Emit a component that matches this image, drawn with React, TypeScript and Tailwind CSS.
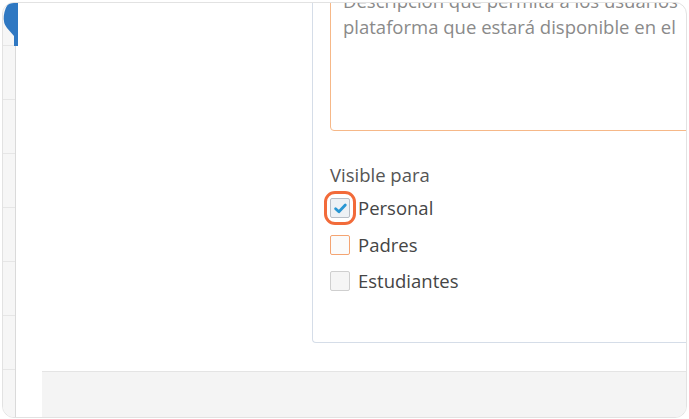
import React from "react";

const font = { fontFamily: '"Open Sans", "Noto Sans", sans-serif' };

function Box({ kind }: { kind: "checked" | "orange" | "plain" }) {
  if (kind === "checked") {
    return (
      <span className="relative flex h-[20px] w-[20px] shrink-0 items-center justify-center">
        <span className="absolute -left-[6px] -top-[7px] h-[34px] w-[32px] rounded-[11px] border-[3px] border-[#f26b3a]" />
        <span className="flex h-[20px] w-[20px] items-center justify-center rounded-[2px] border border-[#b7bec7] bg-[#edf1f5]">
          <svg width="15" height="15" viewBox="0 0 15 15">
            <path d="M2.6 7.8 L5.9 10.8 L12.3 4" fill="none" stroke="#2896d3" strokeWidth="2.8" strokeLinecap="round" strokeLinejoin="round" />
          </svg>
        </span>
      </span>
    );
  }
  if (kind === "orange") {
    return <span className="h-[20px] w-[20px] shrink-0 rounded-[2px] border border-[#f4a472] bg-[#fbfbfb]" />;
  }
  return <span className="h-[20px] w-[20px] shrink-0 rounded-[2px] border border-[#cfcfcf] bg-[#f5f5f5]" />;
}

function Row({ kind, label }: { kind: "checked" | "orange" | "plain"; label: string }) {
  return (
    <div className="flex h-[36.5px] items-center gap-[8px]">
      <Box kind={kind} />
      <span className="text-[18.5px] leading-[24px] text-[#454545]">{label}</span>
    </div>
  );
}

export default function App() {
  return (
    <div className="h-[419px] w-[689px] bg-white pl-[2px] pt-[2px]" style={font}>
      <div className="relative flex h-[416px] w-[685px] overflow-hidden rounded-[12px] border border-[#e2e2e2] bg-white">
        {/* left strip */}
        <div className="flex w-[13px] shrink-0 flex-col border-r border-[#dadada] bg-[#f6f6f6]">
          <div className="h-[43px] border-b border-[#e6e6e6]" />
          <div className="h-[54px] border-b border-[#e6e6e6]" />
          <div className="h-[54px] border-b border-[#e6e6e6]" />
          <div className="h-[54px] border-b border-[#e6e6e6]" />
          <div className="h-[54px] border-b border-[#e6e6e6]" />
          <div className="h-[54px] border-b border-[#e6e6e6]" />
          <div className="h-[54px] border-b border-[#e6e6e6]" />
          <div className="flex-1" />
        </div>

        {/* blue tab overlay */}
        <svg className="absolute left-0 top-0" width="16" height="44" viewBox="0 0 16 44">
          <path d="M15 0 L15 43 L11 43 L11 33 L4 25 Q0 20 0.8 13 Q2 4 6 0 Z" fill="#2f78c2" />
        </svg>

        {/* main */}
        <div className="flex min-w-0 flex-1 flex-col">
          <div className="h-[368px] overflow-hidden pl-[296px]">
            <div className="-mt-[43px] w-[420px] rounded-bl-[4px] border-b border-l border-t border-[#d5dde8] pb-[42px] pl-[17px] pt-[9px]">
              <div className="h-[161px] overflow-hidden rounded-[4px] border border-[#f6b888] pl-[12px] pt-[17px] text-[18.5px] leading-[26px] text-[#8a8a8a]">
                <div className="whitespace-nowrap">Descripción que permita a los usuarios</div>
                <div className="whitespace-nowrap">plataforma que estará disponible en el</div>
              </div>
              <div className="mt-[32px] text-[18.5px] leading-[24px] text-[#555555]">Visible para</div>
              <div className="mt-[3px] flex flex-col">
                <Row kind="checked" label="Personal" />
                <Row kind="orange" label="Padres" />
                <Row kind="plain" label="Estudiantes" />
              </div>
            </div>
          </div>
          <div className="ml-[26px] flex-1 border-t border-[#e4e4e4] bg-[#f4f4f4]" />
        </div>
      </div>
    </div>
  );
}
